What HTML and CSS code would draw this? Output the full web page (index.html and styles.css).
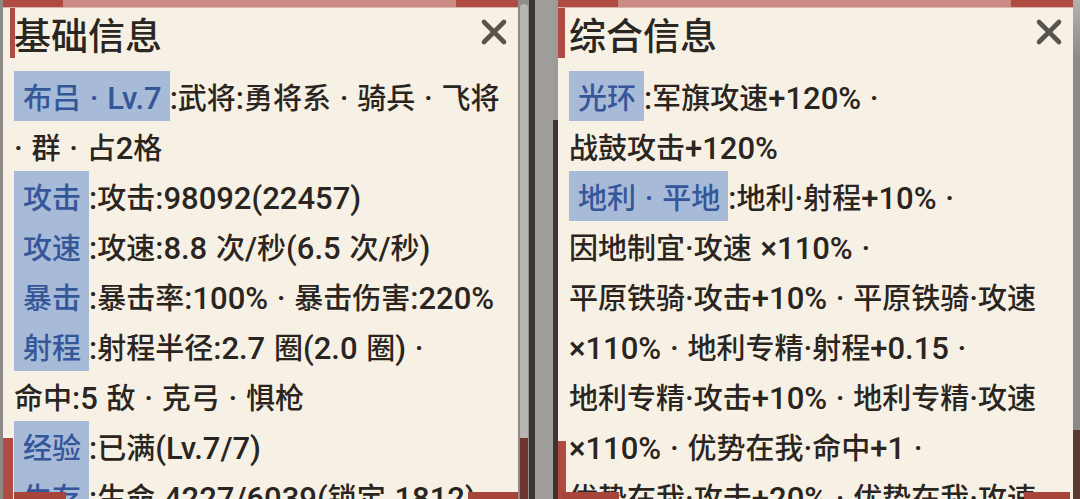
FILE: index.html
```html
<!DOCTYPE html>
<html lang="zh-CN">
<head>
<meta charset="utf-8">
<title>信息面板</title>
<link rel="stylesheet" href="styles.css">
</head>
<body>
<div class="scene">
  <section class="panel panel-left">
    <div class="strip"></div>
    <header class="head">
      <h1 class="title">基础信息</h1>
      <span class="close"><svg viewBox="0 0 28 28" width="28" height="28"><path d="M4 4 L24 24 M24 4 L4 24" stroke="#58534c" stroke-width="4.6" stroke-linecap="round" fill="none"/></svg></span>
    </header>
    <div class="content">
      <div class="entry"><span class="tag">布吕<span class="n"> · Lv.7</span></span><span class="n">:</span>武将<span class="n">:</span>勇将系<span class="n"> · </span>骑兵<span class="n"> · </span>飞将<br><span class="n">· </span>群<span class="n"> · </span>占<span class="n">2</span>格</div>
      <div class="entry"><span class="tag">攻击</span><span class="n">:</span>攻击<span class="n">:98092(22457)</span></div>
      <div class="entry"><span class="tag">攻速</span><span class="n">:</span>攻速<span class="n">:8.8 </span>次<span class="n">/</span>秒<span class="n">(6.5 </span>次<span class="n">/</span>秒<span class="n">)</span></div>
      <div class="entry"><span class="tag">暴击</span><span class="n">:</span>暴击率<span class="n">:100% · </span>暴击伤害<span class="n">:220%</span></div>
      <div class="entry"><span class="tag">射程</span><span class="n">:</span>射程半径<span class="n">:2.7 </span>圈<span class="n">(2.0 </span>圈<span class="n">) ·</span><br>命中<span class="n">:5 </span>敌<span class="n"> · </span>克弓<span class="n"> · </span>惧枪</div>
      <div class="entry"><span class="tag">经验</span><span class="n">:</span>已满<span class="n">(Lv.7/7)</span></div>
      <div class="entry"><span class="tag">生存</span><span class="n">:</span>生命<span class="n"> 4227/6039(</span>锁定<span class="n"> 1812) ·</span></div>
    </div>
    <span class="bracket bracket-tl"></span>
    <span class="bracket bracket-bl"></span>
    <span class="foot foot-a"></span>
    <span class="foot foot-b"></span>
  </section>

  <div class="gutter">
    <div class="track"><div class="thumb"></div></div>
    <div class="rail"></div>
    <div class="gap"></div>
    <div class="rail rail-short"></div>
  </div>

  <section class="panel panel-right">
    <div class="strip"></div>
    <header class="head">
      <h1 class="title">综合信息</h1>
      <span class="close"><svg viewBox="0 0 28 28" width="28" height="28"><path d="M4 4 L24 24 M24 4 L4 24" stroke="#58534c" stroke-width="4.6" stroke-linecap="round" fill="none"/></svg></span>
    </header>
    <div class="content">
      <div class="entry"><span class="tag">光环</span><span class="n">:</span>军旗攻速<span class="n">+120% ·</span><br>战鼓攻击<span class="n">+120%</span></div>
      <div class="entry"><span class="tag">地利<span class="n"> · </span>平地</span><span class="n">:</span>地利<span class="n">·</span>射程<span class="n">+10% ·</span><br>因地制宜<span class="n">·</span>攻速<span class="n"> ×110% ·</span><br>平原铁骑<span class="n">·</span>攻击<span class="n">+10% · </span>平原铁骑<span class="n">·</span>攻速<br><span class="n">×110% · </span>地利专精<span class="n">·</span>射程<span class="n">+0.15 ·</span><br>地利专精<span class="n">·</span>攻击<span class="n">+10% · </span>地利专精<span class="n">·</span>攻速<br><span class="n">×110% · </span>优势在我<span class="n">·</span>命中<span class="n">+1 ·</span><br>优势在我<span class="n">·</span>攻击<span class="n">+20% · </span>优势在我<span class="n">·</span>攻速</div>
    </div>
    <span class="bracket bracket-tl"></span>
    <span class="bracket bracket-bl"></span>
    <span class="foot foot-a"></span>
    <span class="foot foot-b"></span>
  </section>

  <div class="edge"><div class="edge-top"></div><div class="edge-bottom"></div></div>
</div>
</body>
</html>
```

FILE: styles.css
```css
* { box-sizing: border-box; }
html, body {
  margin: 0;
  padding: 0;
  width: 1080px;
  height: 499px;
  overflow: hidden;
  background: #8d8a86;
}
.scene {
  display: flex;
  width: 1080px;
  height: 499px;
  padding-left: 3px;
  background: #8d8a86;
  font-family: "Noto Sans CJK SC", sans-serif;
  color: #2a2520;
}
.panel {
  position: relative;
  width: 515px;
  height: 499px;
  background: #f7f1e5;
  overflow: hidden;
  display: flex;
  flex-direction: column;
  flex: none;
}
.strip {
  height: 8px;
  flex: none;
  background: linear-gradient(to right, #b04b41 0, #b04b41 60px, #c98b82 60px, #c98b82 calc(100% - 62px), #b04b41 calc(100% - 62px));
  border-bottom: 1px solid #d9b2aa;
}
.head {
  height: 52px;
  flex: none;
  display: flex;
  align-items: center;
  justify-content: space-between;
  padding: 0 10px 0 11px;
}
.title {
  margin: 0;
  font-size: 37px;
  font-weight: 500;
  line-height: 52px;
  color: #2a2621;
}
.close {
  width: 28px;
  height: 28px;
  display: flex;
  margin-top: -4px;
}
.content {
  padding: 11px 0 0 11px;
  font-size: 29px;
  font-weight: 500;
  line-height: 50px;
  white-space: nowrap;
}
.n {
  font-family: "Roboto", "Noto Sans", sans-serif;
  font-size: 31px;
  line-height: 1;
  word-spacing: 1px;
}
.entry { margin: 0; }
.tag {
  display: inline-block;
  height: 50px;
  line-height: 50px;
  padding: 0 8px 0 9px;
  background: #a7bad7;
  color: #35579a;
  vertical-align: top;
}
.bracket {
  position: absolute;
  background: #b04b41;
}
.bracket-tl {
  left: 7px;
  top: 8px;
  width: 5px;
  height: 50px;
}
.bracket-bl {
  left: 0;
  top: 438px;
  width: 10px;
  height: 61px;
}
.panel-right .bracket-tl { left: 0; width: 7px; }
.panel-right .bracket-bl { left: 0; width: 8px; top: 441px; }
.foot {
  position: absolute;
  bottom: 0;
  height: 7px;
  background: #a8453b;
}
.foot-a { left: 11px; width: 52px; }
.foot-b { right: 0; width: 50px; }
.panel-right .foot-a { left: 3px; width: 58px; }
.panel-right .foot-b { right: 3px; width: 46px; }

.gutter {
  width: 40px;
  height: 499px;
  flex: none;
  display: flex;
  background: #9c9a97;
}
.track {
  width: 11px;
  padding: 4px 1px 0 2px;
  background: #8f8b87;
  display: flex;
  flex-direction: column;
}
.thumb {
  height: 434px;
  border-radius: 5px 5px 2px 2px;
  background: #b8b6b3;
}
.track::after {
  content: "";
  flex: 1;
  background: #6c3530;
}
.rail {
  width: 6px;
  background: #3d3531;
}
.gap {
  width: 18px;
  background: #a09e9b;
}
.rail-short {
  width: 5px;
  margin-top: 120px;
}
.edge {
  width: 7px;
  flex: none;
  display: flex;
  flex-direction: column;
}
.edge-top { height: 430px; background: linear-gradient(#b3b1ae, #8c8a87 60px); }
.edge-bottom { flex: 1; background: #5a3833; }
```
